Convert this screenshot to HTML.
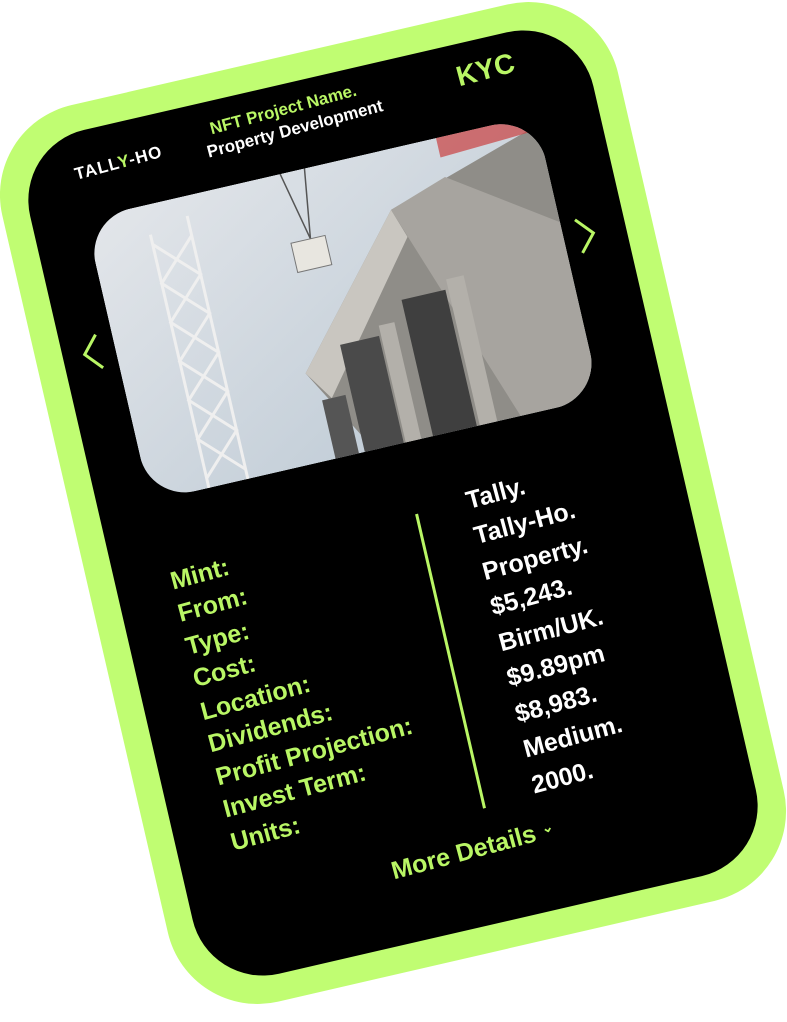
<!DOCTYPE html>
<html><head><meta charset="utf-8"><style>
html,body{margin:0;padding:0;background:#fff;width:787px;height:1005px;overflow:hidden}
.card{position:absolute;left:77px;top:43px;width:632px;height:920px;background:#c0fd72;border-radius:92px;transform:rotate(-13deg);transform-origin:50% 50%}
.inner{position:absolute;left:27px;top:27px;right:27px;bottom:27px;background:#000;border-radius:72px}
.t{position:absolute;font-family:"Liberation Sans",sans-serif;white-space:nowrap;line-height:1;transform:rotate(-2deg);transform-origin:0 50%}
.g{color:#b9f665}
.w{color:#fff}
.img{position:absolute;left:80px;top:114px;width:462px;height:290px;border-radius:46px;overflow:hidden}
.labels .t{font-size:25px;left:82px;font-weight:bold}
.vals .t{font-size:25px;left:388px;font-weight:bold}
</style></head><body>
<div class="card">
 <div class="inner"></div>
 <div class="t w" style="left:80px;top:60px;font-size:17px;letter-spacing:1px;font-weight:bold">TALL<span style="color:#b9f665">Y</span>-HO</div>
 <div class="t g" style="left:222px;top:46px;font-size:17px;font-weight:bold">NFT Project Name.</div>
 <div class="t w" style="left:214px;top:68px;font-size:17px;font-weight:bold">Property Development</div>
 <div class="t g" style="left:474px;top:46px;font-size:28px;font-weight:bold">KYC</div>
 <svg style="position:absolute;left:44px;top:226px" width="24" height="40" viewBox="0 0 24 40"><path d="M20 3 L5 20 L20 37" fill="none" stroke="#b9f665" stroke-width="3"/></svg>
 <svg style="position:absolute;left:553px;top:222px" width="24" height="40" viewBox="0 0 24 40"><path d="M4 3 L19 20 L4 37" fill="none" stroke="#b9f665" stroke-width="3"/></svg>
 <div class="img">
  <svg width="462" height="290" viewBox="0 0 462 290">
   <defs><linearGradient id="sky" x1="0" y1="0" x2="1" y2="1"><stop offset="0" stop-color="#e3e6ea"/><stop offset="1" stop-color="#b8c6d2"/></linearGradient></defs>
   <rect width="462" height="290" fill="url(#sky)"/>
   <polygon points="300,60 462,10 462,290 230,290 180,200" fill="#8f8d88"/>
   <polygon points="300,60 360,40 462,110 462,290 380,290" fill="#a7a49f"/>
   <polygon points="180,200 300,60 310,90 200,230" fill="#c9c6c0"/>
   <rect x="220" y="180" width="40" height="110" fill="#4a4a4a"/>
   <rect x="290" y="150" width="45" height="140" fill="#3f3f3f"/>
   <rect x="190" y="230" width="24" height="60" fill="#555"/>
   <rect x="262" y="170" width="16" height="120" fill="#b3b0aa"/>
   <rect x="338" y="140" width="18" height="150" fill="#b3b0aa"/>
   <g stroke="#efefef" stroke-width="3" fill="none">
    <path d="M60 30 L60 290 M100 20 L100 290"/>
    <path d="M60 40 L100 80 L60 120 L100 160 L60 200 L100 240 L60 280"/>
    <path d="M100 40 L60 80 L100 120 L60 160 L100 200 L60 240 L100 280"/>
   </g>
   <path d="M200 0 L215 70 M215 70 L225 0" stroke="#555" stroke-width="1.5"/>
   <rect x="195" y="70" width="35" height="30" fill="#e8e6e0" stroke="#777"/>
   <path d="M360 0 L462 -10 L462 15 L360 20 Z" fill="#c94040" opacity=".7"/>
  </svg>
 </div>
 <div style="position:absolute;left:335px;top:476px;width:3px;height:302px;background:#b9f665"></div>
 <div class="labels g">
  <div class="t" style="top:475px">Mint:</div>
  <div class="t" style="top:508px">From:</div>
  <div class="t" style="top:542px">Type:</div>
  <div class="t" style="top:575px">Cost:</div>
  <div class="t" style="top:609px">Location:</div>
  <div class="t" style="top:642px">Dividends:</div>
  <div class="t" style="top:676px">Profit Projection:</div>
  <div class="t" style="top:709px">Invest Term:</div>
  <div class="t" style="top:743px">Units:</div>
 </div>
 <div class="vals w">
  <div class="t" style="top:463px">Tally.</div>
  <div class="t" style="top:499px">Tally-Ho.</div>
  <div class="t" style="top:536px">Property.</div>
  <div class="t" style="top:572px">$5,243.</div>
  <div class="t" style="top:609px">Birm/UK.</div>
  <div class="t" style="top:645px">$9.89pm</div>
  <div class="t" style="top:682px">$8,983.</div>
  <div class="t" style="top:718px">Medium.</div>
  <div class="t" style="top:755px">2000.</div>
 </div>
 <div class="t g" style="left:232px;top:807px;font-size:25px;font-weight:bold">More Details <span style="font-size:14px;vertical-align:6px">&#8964;</span></div>
</div>
</body></html>
